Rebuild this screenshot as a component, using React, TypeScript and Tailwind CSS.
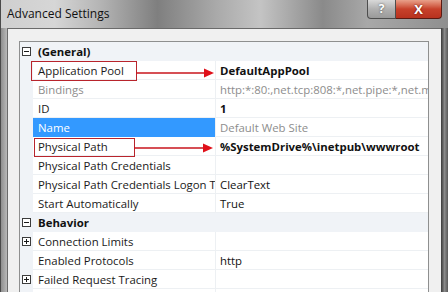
import React from 'react';

type Row = {
  kind: 'cat' | 'prop';
  name: string;
  value?: string;
  expander?: 'minus' | 'plus';
  muted?: boolean;
  bold?: boolean;
  selected?: boolean;
};

const rows: Row[] = [
  { kind: 'cat', name: '(General)', expander: 'minus' },
  { kind: 'prop', name: 'Application Pool', value: 'DefaultAppPool', bold: true },
  { kind: 'prop', name: 'Bindings', value: 'http:*:80:,net.tcp:808:*,net.pipe:*,net.msmq:localhost', muted: true },
  { kind: 'prop', name: 'ID', value: '1', bold: true },
  { kind: 'prop', name: 'Name', value: 'Default Web Site', muted: true, selected: true },
  { kind: 'prop', name: 'Physical Path', value: '%SystemDrive%\\inetpub\\wwwroot', bold: true },
  { kind: 'prop', name: 'Physical Path Credentials', value: '' },
  { kind: 'prop', name: 'Physical Path Credentials Logon Type', value: 'ClearText' },
  { kind: 'prop', name: 'Start Automatically', value: 'True' },
  { kind: 'cat', name: 'Behavior', expander: 'minus' },
  { kind: 'prop', name: 'Connection Limits', value: '', expander: 'plus' },
  { kind: 'prop', name: 'Enabled Protocols', value: 'http' },
  { kind: 'prop', name: 'Failed Request Tracing', value: '', expander: 'plus' },
  { kind: 'prop', name: '', value: '' },
];

function Expander({ type }: { type: 'minus' | 'plus' }) {
  return (
    <svg width="9" height="9" viewBox="0 0 9 9" className="block">
      <rect x="0.5" y="0.5" width="8" height="8" fill="#fff" stroke="#3c3c3c" />
      <line x1="2" y1="4.5" x2="7" y2="4.5" stroke="#1a1a1a" />
      {type === 'plus' && <line x1="4.5" y1="2" x2="4.5" y2="7" stroke="#1a1a1a" />}
    </svg>
  );
}

function Arrow({ left, top, width }: { left: number; top: number; width: number }) {
  return (
    <svg
      className="absolute"
      style={{ left, top }}
      width={width}
      height="10"
      viewBox={`0 0 ${width} 10`}
    >
      <line x1="0" y1="5" x2={width - 9} y2="5" stroke="#c8141c" strokeWidth="1.3" />
      <polygon points={`${width - 10},0.5 ${width},5 ${width - 10},9.5`} fill="#e0101a" />
    </svg>
  );
}

export default function App() {
  return (
    <div
      className="w-[448px] h-[292px] overflow-hidden flex flex-col bg-[#9c9c9c] border-l border-[#4a4a4a]"
      style={{ fontFamily: '"Segoe UI", "Open Sans", "Noto Sans", sans-serif' }}
    >
      {/* title bar */}
      <div className="h-[28px] shrink-0 flex items-start bg-[linear-gradient(90deg,#cfcfcf_0%,#d6d6d6_12%,#b5b5b5_22%,#7f7f7f_35%,#a9a9a9_48%,#c4c4c4_58%,#8a8a8a_72%,#a8a8a8_82%,#8f8f8f_100%)]">
        <div className="pl-[6px] pt-[5px] text-[12px] text-[#111]">Advanced Settings</div>
        <div className="ml-auto mr-[6px] flex">
          <div className="w-[29px] h-[19px] flex items-center justify-center rounded-bl-[4px] border border-t-0 border-[#4d4d4d] bg-gradient-to-b from-[#d9d9d9] via-[#b0b0b0] to-[#9a9a9a] text-white text-[12px] font-bold leading-none [text-shadow:0_0_2px_#444]">
            ?
          </div>
          <div className="w-[46px] h-[19px] flex items-center justify-center rounded-br-[4px] border border-t-0 border-l-0 border-[#5a1a12] bg-gradient-to-b from-[#e8a08a] via-[#c7412b] to-[#b8321e] text-white text-[13px] font-bold leading-none [text-shadow:0_0_2px_#5a0a00]">
            X
          </div>
        </div>
      </div>

      <div className="flex-1 min-h-0 grid grid-cols-[6px_minmax(0,1fr)_7px]">
        <div className="bg-gradient-to-r from-[#8f8f8f] to-[#b9b9b9]" />
        <div className="min-w-0 overflow-hidden bg-[#f0f0f0] border-l border-t border-[#6a6a6a] pl-[11px] pr-[12px] pt-[12px]">
          <div className="relative overflow-hidden border border-[#8e8f8f] bg-white text-[11.4px] leading-[19px]">
            {rows.map((r, i) =>
              r.kind === 'cat' ? (
                <div key={i} className="flex h-[19px] bg-[#f0f3f7] items-center">
                  <div className="w-[13px] shrink-0 pl-[2px] flex items-center">
                    {r.expander && <Expander type={r.expander} />}
                  </div>
                  <div className="pl-[5px] font-bold text-[#111]">{r.name}</div>
                </div>
              ) : (
                <div key={i} className="flex h-[19px]">
                  <div className="w-[13px] shrink-0 bg-[#f0f3f7] pl-[2px] flex items-center">
                    {r.expander && <Expander type={r.expander} />}
                  </div>
                  <div
                    className={`w-[182px] shrink-0 pl-[5px] whitespace-nowrap overflow-hidden border-b ${
                      r.selected
                        ? 'bg-[#3399ff] text-white border-[#3399ff]'
                        : r.muted
                        ? 'text-[#8d8d8d] border-[#edf0f3]'
                        : 'text-[#1a1a1a] border-[#edf0f3]'
                    }`}
                  >
                    {r.name}
                  </div>
                  <div
                    className={`flex-1 min-w-0 pl-[4px] whitespace-nowrap overflow-hidden border-l border-b border-[#edf0f3] ${
                      r.muted ? 'text-[#8d8d8d]' : 'text-[#111]'
                    } ${r.bold ? 'font-bold' : ''}`}
                  >
                    {r.value}
                  </div>
                </div>
              )
            )}

            {/* red annotations */}
            <div className="absolute left-[11px] top-[19px] w-[106px] h-[20px] border-[1.5px] border-[#b8242c]" />
            <Arrow left={116} top={26} width={78} />
            <div className="absolute left-[14px] top-[96px] w-[101px] h-[19px] border-[1.5px] border-[#b8242c]" />
            <Arrow left={114} top={101} width={79} />
          </div>
        </div>
        <div className="bg-gradient-to-r from-[#3a3a3a] via-[#8a8a8a] to-[#5a5a5a]" />
      </div>
    </div>
  );
}
